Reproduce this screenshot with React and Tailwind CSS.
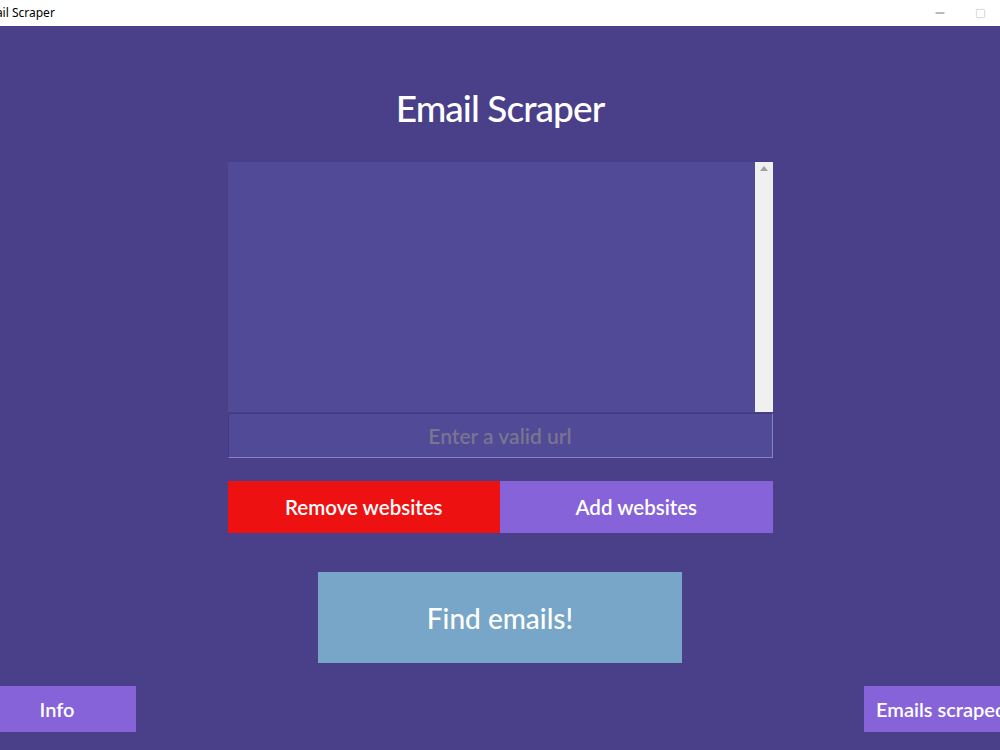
import { Minus, Square } from 'lucide-react';

const font = { fontFamily: 'Lato, "Open Sans", sans-serif' };

const App = () => {
  return (
    <div className="w-[1000px] h-[750px] flex flex-col overflow-hidden bg-[#4a3f89]" style={font}>
      {/* Window title bar */}
      <div className="h-[26px] bg-white flex items-center justify-between shrink-0">
        <span className="text-[12px] text-black -ml-[22px]" style={{ fontFamily: '"Noto Sans", sans-serif' }}>
          Email Scraper
        </span>
        <div className="flex items-center gap-[28px] pr-[14px]">
          <Minus className="w-[14px] h-[14px] text-[#666]" strokeWidth={1.5} />
          <Square className="w-[11px] h-[11px] text-[#c8c8c8]" strokeWidth={1.5} />
        </div>
      </div>

      <div className="flex-1 flex flex-col items-center">
        <h1 className="mt-[62px] text-[37px] leading-[40px] text-white font-medium tracking-tight">Email Scraper</h1>

        {/* Website list */}
        <div className="mt-[34px] w-[545px] flex flex-col">
          <div className="h-[250px] flex bg-[#514a97]">
            <div className="flex-1" />
            <div className="w-[18px] bg-[#f0f0f0] flex justify-center pt-[4px]">
              <div className="w-0 h-0 border-l-[4px] border-r-[4px] border-b-[5px] border-l-transparent border-r-transparent border-b-[#a0a0a0]" />
            </div>
          </div>
          <div className="h-[45px] mt-[1px] bg-[#514a97] border border-[#423a82] border-b-[#8a82c8] border-r-[#8a82c8] flex items-center justify-center">
            <span className="text-[21px] text-[#7a7490] font-semibold">Enter a valid url</span>
          </div>
        </div>

        {/* List actions */}
        <div className="mt-[23px] w-[545px] h-[52px] flex">
          <button className="flex-1 bg-[#ee1111] text-white text-[20.5px] font-semibold">Remove websites</button>
          <button className="flex-1 bg-[#8663d8] text-white text-[20.5px] font-semibold">Add websites</button>
        </div>

        <button className="mt-[39px] w-[364px] h-[91px] bg-[#78a6c8] text-white text-[28px] font-medium">
          Find emails!
        </button>

        <div className="mt-[23px] w-full flex justify-between">
          <button className="w-[136px] h-[46px] bg-[#8663d8] text-white text-[20px] font-semibold pr-[22px]">Info</button>
          <button className="w-[136px] h-[46px] bg-[#8663d8] text-white text-[20px] font-semibold whitespace-nowrap overflow-hidden text-left pl-[12px]">
            Emails scraped
          </button>
        </div>
      </div>
    </div>
  );
};

export default App;
